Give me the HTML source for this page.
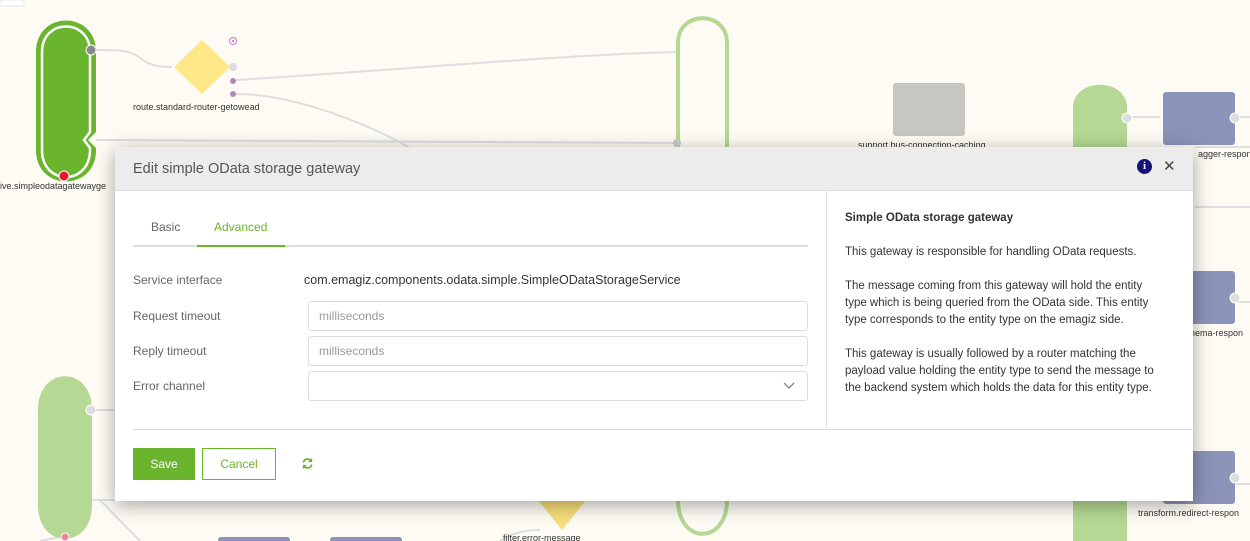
<!DOCTYPE html>
<html><head><meta charset="utf-8">
<style>
*{box-sizing:border-box;margin:0;padding:0}
body{width:1250px;height:541px;overflow:hidden;background:#fdfbf3;font-family:"Liberation Sans",sans-serif;position:relative}
#bg{position:absolute;left:0;top:0}
.modal{position:absolute;left:115px;top:147px;width:1078px;height:354px;background:#fff;box-shadow:0 4px 18px rgba(0,0,0,.35)}
.hdr{height:44px;background:#ececec;border-bottom:1px solid #dcdcdc;position:relative}
.hdr .t{position:absolute;left:18px;top:14px;font-size:14.5px;color:#555}
.info{position:absolute;left:1022px;top:12px;width:15px;height:15px;border-radius:50%;background:#14137a;color:#fff;font:bold 11px "Liberation Serif",serif;text-align:center;line-height:15px}
.x{position:absolute;left:1048px;top:10px;font-size:15px;color:#444}
.vdiv{position:absolute;left:711px;top:44px;width:1px;height:238px;background:#e2e2e2}
.tabs{position:absolute;left:18px;top:70px;width:675px;height:30px;border-bottom:2px solid #ddd}
.tab{position:absolute;top:3px;font-size:12px;color:#666}
.tab.a{color:#6bb52e}
.ul{position:absolute;left:64px;bottom:-2px;width:88px;height:2px;background:#6bb52e}
.lbl{position:absolute;left:18px;font-size:12px;color:#666}
.val{position:absolute;left:189px;font-size:12.5px;color:#333}
.inp{position:absolute;left:193px;width:500px;height:30px;border:1px solid #ddd;border-radius:3px;font-size:12px;color:#999;padding:7px 10px}
.help{position:absolute;left:730px;top:63px;width:322px;font-size:11.5px;color:#333;line-height:17px}
.help b{display:block;margin-bottom:17px}
.help p{margin-bottom:17px}
.fline{position:absolute;left:18px;top:282px;width:1060px;height:1px;background:#dcdcdc}
.save{position:absolute;left:18px;top:301px;width:62px;height:32px;background:#6bb52e;color:#fff;font-size:12px;text-align:center;line-height:32px}
.cancel{position:absolute;left:87px;top:301px;width:74px;height:32px;border:1px solid #6bb52e;color:#6bb52e;font-size:12px;text-align:center;line-height:30px}
</style></head><body>
<svg id="bg" width="1250" height="541" viewBox="0 0 1250 541">
<rect x="0" y="0" width="24" height="6" rx="2" fill="#fff" stroke="#e6e6e6"/>
<g fill="none" stroke="#dedede" stroke-width="2">
<path d="M96 50 C120 50 130 50 140 58 C150 66 160 67 172 67"/>
<path d="M236 80 C400 70 560 55 676 52"/>
<path d="M236 94 C300 94 380 130 410 148"/>
<path d="M96 140 L676 143"/>
<path d="M1130 117 L1160 117"/>
<path d="M1230 117 L1250 117"/>
<path d="M1230 302 L1250 302"/>
<path d="M1230 484 L1250 484"/>
<path d="M1195 147 L1250 147"/><path d="M1195 207 L1250 207"/>
<path d="M92 410 L115 410"/><path d="M92 500 L115 500"/>
<path d="M100 500 L140 541"/>
<path d="M60 537 L40 541"/>
<path d="M500 541 C510 535 520 530 540 530"/>
</g>
<path d="M36 52 C36 10 96 10 96 52 V132 L88 140 L96 148 V150 C96 192 36 192 36 150 Z" fill="#6bb52e"/>
<path d="M42 52 C42 18 90 18 90 52 V132 L84 140 L90 148 V150 C90 186 42 186 42 150 Z" fill="none" stroke="#fff" stroke-width="2.5"/>
<circle cx="91" cy="50" r="5" fill="#888" stroke="#fff"/>
<circle cx="64" cy="176" r="5" fill="#e8182c" stroke="#fff"/>
<path d="M202 40 L230 67 L202 94 L174 67 Z" fill="#fee787"/>
<circle cx="233" cy="67" r="4" fill="#ddd"/>
<circle cx="233" cy="81" r="3" fill="#b08ab8"/><circle cx="233" cy="94" r="3" fill="#b08ab8"/>
<circle cx="233" cy="41" r="3.5" fill="none" stroke="#c98ed0" stroke-width="1.2"/><circle cx="233" cy="41" r="1.2" fill="#c98ed0"/>
<text x="133" y="110" font-size="9" fill="#333" font-family="Liberation Sans">route.standard-router-getowead</text>
<text x="0" y="189" font-size="9" fill="#333" font-family="Liberation Sans">ive.simpleodatagatewayge</text>
<path d="M678 150 V43 C678 10 727 10 727 43 V150" fill="none" stroke="#b5d994" stroke-width="4"/>
<circle cx="677" cy="143" r="4" fill="#ccc"/>
<rect x="893" y="83" width="72" height="53" rx="3" fill="#c7c6c2"/>
<text x="858" y="148" font-size="9" fill="#333" font-family="Liberation Sans">support.bus-connection-caching</text>
<path d="M1073 150 V108 C1073 77 1127 77 1127 108 V150 Z" fill="#b5d994"/>
<circle cx="1127" cy="118" r="5" fill="#ddd" stroke="#fff"/>
<rect x="1163" y="92" width="72" height="53" rx="3" fill="#8b94b8"/>
<circle cx="1235" cy="118" r="5" fill="#ddd" stroke="#fff"/>
<text x="1198" y="157" font-size="9" fill="#333" font-family="Liberation Sans">agger-respon</text>
<rect x="1163" y="271" width="72" height="53" rx="3" fill="#8b94b8"/>
<circle cx="1235" cy="298" r="5" fill="#ddd" stroke="#fff"/>
<text x="1190" y="336" font-size="9" fill="#333" font-family="Liberation Sans">nema-respon</text>
<rect x="1163" y="451" width="72" height="53" rx="3" fill="#8b94b8"/>
<circle cx="1235" cy="478" r="5" fill="#ddd" stroke="#fff"/>
<text x="1138" y="516" font-size="9" fill="#333" font-family="Liberation Sans">transform.redirect-respon</text>
<rect x="1073" y="490" width="54" height="60" fill="#b5d994"/>
<path d="M38 410 C38 365 92 365 92 410 V505 C92 550 38 550 38 505 Z" fill="#b5d994"/>
<circle cx="91" cy="410" r="5" fill="#ddd" stroke="#fff"/>
<circle cx="65" cy="537" r="4" fill="#e88a95" stroke="#fff"/>
<rect x="218" y="537" width="72" height="20" rx="3" fill="#8b94b8"/>
<rect x="330" y="537" width="72" height="20" rx="3" fill="#8b94b8"/>
<path d="M538 500 L586 500 L562 530 Z" fill="#f5de7a"/>
<text x="503" y="541" font-size="9" fill="#333" font-family="Liberation Sans">filter.error-message</text>
<path d="M678 500 C678 545 727 545 727 500" fill="none" stroke="#b5d994" stroke-width="4"/>
</svg>
<div class="modal">
<div class="hdr"><div class="t">Edit simple OData storage gateway</div><div class="info">i</div><div class="x">✕</div></div>
<div class="vdiv"></div>
<div class="tabs"><span class="tab" style="left:18px">Basic</span><span class="tab a" style="left:81px">Advanced</span><div class="ul"></div></div>
<div class="lbl" style="top:126px">Service interface</div>
<div class="val" style="top:126px">com.emagiz.components.odata.simple.SimpleODataStorageService</div>
<div class="lbl" style="top:162px">Request timeout</div>
<div class="inp" style="top:154px">milliseconds</div>
<div class="lbl" style="top:197px">Reply timeout</div>
<div class="inp" style="top:189px">milliseconds</div>
<div class="lbl" style="top:232px">Error channel</div>
<div class="inp" style="top:224px"><svg style="position:absolute;right:12px;top:10px" width="12" height="8" viewBox="0 0 12 8"><path d="M1 1 L6 6 L11 1" fill="none" stroke="#777" stroke-width="1.2"/></svg></div>
<div class="help"><b>Simple OData storage gateway</b>
<p>This gateway is responsible for handling OData requests.</p>
<p>The message coming from this gateway will hold the entity type which is being queried from the OData side. This entity type corresponds to the entity type on the emagiz side.</p>
<p>This gateway is usually followed by a router matching the payload value holding the entity type to send the message to the backend system which holds the data for this entity type.</p></div>
<div class="fline"></div>
<div class="save">Save</div>
<div class="cancel">Cancel</div>
<svg style="position:absolute;left:186px;top:310px" width="13" height="13" viewBox="0 0 14 14"><path d="M2.5 6 A4.6 4.6 0 0 1 11 4.5" fill="none" stroke="#6bb52e" stroke-width="1.8"/><path d="M12 1 L12 5.5 L7.5 5.5 Z" fill="#6bb52e"/><path d="M11.5 8 A4.6 4.6 0 0 1 3 9.5" fill="none" stroke="#6bb52e" stroke-width="1.8"/><path d="M2 13 L2 8.5 L6.5 8.5 Z" fill="#6bb52e"/></svg>
</div>
</body></html>
